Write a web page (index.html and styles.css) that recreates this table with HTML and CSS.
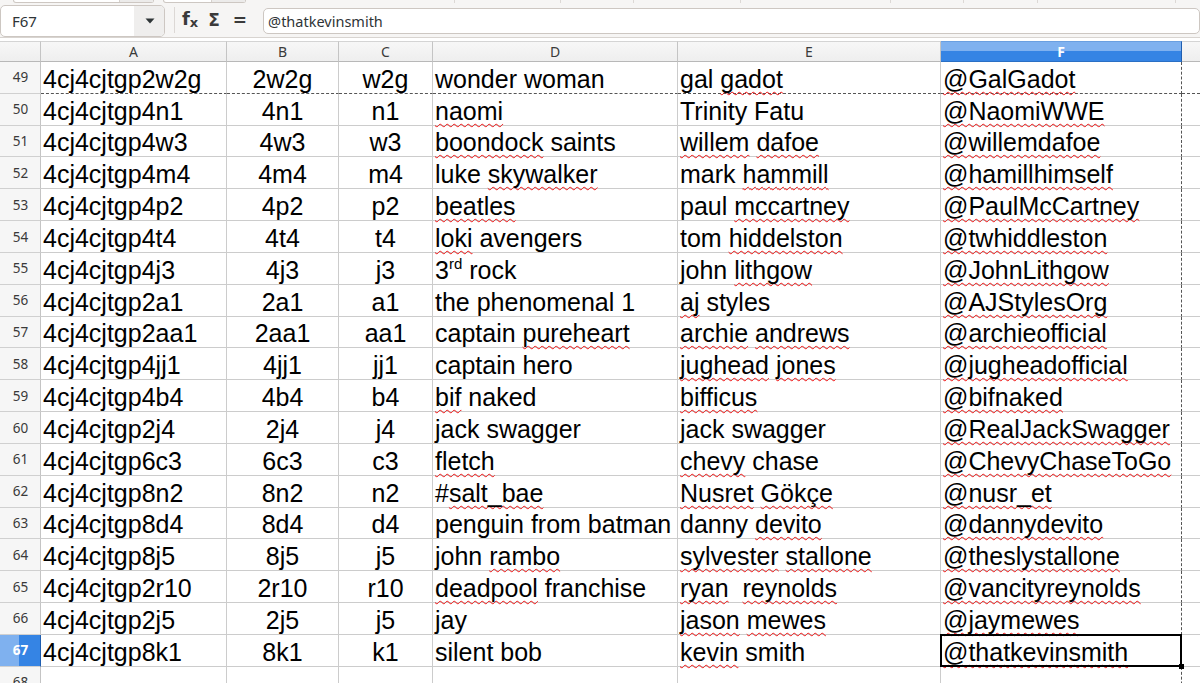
FILE: index.html
```html
<!DOCTYPE html>
<html>
<head>
<meta charset="utf-8">
<link rel="stylesheet" href="styles.css">
</head>
<body>
<div class="app">
  <div class="topstrip">
    <div class="tb tb1"><span class="tbbtn"></span></div>
    <div class="tb tb2"><span class="tbbtn"></span></div>
    <div class="tsep s1"></div>
    <div class="tsep s2"></div>
    <div class="tsep s3"></div>
    <div class="tsep s4"></div>
    <div class="tsep s5"></div>
    <div class="tsep s6"></div>
    <div class="tsep s7"></div>
    <div class="tsep s8"></div>
  </div>
  <div class="fbar">
    <div class="namebox">
      <div class="nb-text">F67</div>
      <div class="nb-btn"><svg width="10" height="6" viewBox="0 0 10 6"><path d="M0.5 0.5 L9.5 0.5 L5 5.5 Z" fill="#2e3436"/></svg></div>
    </div>
    <div class="vsep"></div>
    <div class="ficon fx">f<span class="fxsub">x</span></div>
    <div class="ficon sigma">Σ</div>
    <div class="ficon eq">=</div>
    <div class="finput">@thatkevinsmith</div>
  </div>
  <div class="sheet">
    <div class="row hdr">
      <div class="corner"></div>
      <div class="ch">A</div>
      <div class="ch">B</div>
      <div class="ch">C</div>
      <div class="ch">D</div>
      <div class="ch">E</div>
      <div class="ch sel">F</div>
      <div class="ch rest"></div>
    </div>
    <div class="row brk">
      <div class="rh">49</div><div class="c"><span class="t">4cj4cjtgp2w2g</span></div><div class="c m"><span class="t">2w2g</span></div><div class="c m"><span class="t">w2g</span></div><div class="c"><span class="t">wonder woman</span></div><div class="c"><span class="t">gal <span class="sp">gadot</span></span></div><div class="c f"><span class="t"><span class="sp">@GalGadot</span></span></div><div class="c rest"></div>
    </div>
    <div class="row">
      <div class="rh">50</div><div class="c"><span class="t">4cj4cjtgp4n1</span></div><div class="c m"><span class="t">4n1</span></div><div class="c m"><span class="t">n1</span></div><div class="c"><span class="t"><span class="sp">naomi</span></span></div><div class="c"><span class="t">Trinity Fatu</span></div><div class="c f"><span class="t"><span class="sp">@NaomiWWE</span></span></div><div class="c rest"></div>
    </div>
    <div class="row">
      <div class="rh">51</div><div class="c"><span class="t">4cj4cjtgp4w3</span></div><div class="c m"><span class="t">4w3</span></div><div class="c m"><span class="t">w3</span></div><div class="c"><span class="t"><span class="sp">boondock</span> saints</span></div><div class="c"><span class="t"><span class="sp">willem</span> <span class="sp">dafoe</span></span></div><div class="c f"><span class="t"><span class="sp">@willemdafoe</span></span></div><div class="c rest"></div>
    </div>
    <div class="row">
      <div class="rh">52</div><div class="c"><span class="t">4cj4cjtgp4m4</span></div><div class="c m"><span class="t">4m4</span></div><div class="c m"><span class="t">m4</span></div><div class="c"><span class="t">luke <span class="sp">skywalker</span></span></div><div class="c"><span class="t">mark <span class="sp">hammill</span></span></div><div class="c f"><span class="t"><span class="sp">@hamillhimself</span></span></div><div class="c rest"></div>
    </div>
    <div class="row">
      <div class="rh">53</div><div class="c"><span class="t">4cj4cjtgp4p2</span></div><div class="c m"><span class="t">4p2</span></div><div class="c m"><span class="t">p2</span></div><div class="c"><span class="t"><span class="sp">beatles</span></span></div><div class="c"><span class="t">paul <span class="sp">mccartney</span></span></div><div class="c f"><span class="t"><span class="sp">@PaulMcCartney</span></span></div><div class="c rest"></div>
    </div>
    <div class="row">
      <div class="rh">54</div><div class="c"><span class="t">4cj4cjtgp4t4</span></div><div class="c m"><span class="t">4t4</span></div><div class="c m"><span class="t">t4</span></div><div class="c"><span class="t"><span class="sp">loki</span> avengers</span></div><div class="c"><span class="t">tom <span class="sp">hiddelston</span></span></div><div class="c f"><span class="t"><span class="sp">@twhiddleston</span></span></div><div class="c rest"></div>
    </div>
    <div class="row">
      <div class="rh">55</div><div class="c"><span class="t">4cj4cjtgp4j3</span></div><div class="c m"><span class="t">4j3</span></div><div class="c m"><span class="t">j3</span></div><div class="c"><span class="t">3<span class="sup">rd</span> rock</span></div><div class="c"><span class="t">john <span class="sp">lithgow</span></span></div><div class="c f"><span class="t"><span class="sp">@JohnLithgow</span></span></div><div class="c rest"></div>
    </div>
    <div class="row">
      <div class="rh">56</div><div class="c"><span class="t">4cj4cjtgp2a1</span></div><div class="c m"><span class="t">2a1</span></div><div class="c m"><span class="t">a1</span></div><div class="c"><span class="t">the phenomenal 1</span></div><div class="c"><span class="t"><span class="sp">aj</span> styles</span></div><div class="c f"><span class="t"><span class="sp">@AJStylesOrg</span></span></div><div class="c rest"></div>
    </div>
    <div class="row">
      <div class="rh">57</div><div class="c"><span class="t">4cj4cjtgp2aa1</span></div><div class="c m"><span class="t">2aa1</span></div><div class="c m"><span class="t">aa1</span></div><div class="c"><span class="t">captain <span class="sp">pureheart</span></span></div><div class="c"><span class="t"><span class="sp">archie</span> <span class="sp">andrews</span></span></div><div class="c f"><span class="t"><span class="sp">@archieofficial</span></span></div><div class="c rest"></div>
    </div>
    <div class="row">
      <div class="rh">58</div><div class="c"><span class="t">4cj4cjtgp4jj1</span></div><div class="c m"><span class="t">4jj1</span></div><div class="c m"><span class="t">jj1</span></div><div class="c"><span class="t">captain hero</span></div><div class="c"><span class="t"><span class="sp">jughead</span> <span class="sp">jones</span></span></div><div class="c f"><span class="t"><span class="sp">@jugheadofficial</span></span></div><div class="c rest"></div>
    </div>
    <div class="row">
      <div class="rh">59</div><div class="c"><span class="t">4cj4cjtgp4b4</span></div><div class="c m"><span class="t">4b4</span></div><div class="c m"><span class="t">b4</span></div><div class="c"><span class="t"><span class="sp">bif</span> naked</span></div><div class="c"><span class="t"><span class="sp">bifficus</span></span></div><div class="c f"><span class="t"><span class="sp">@bifnaked</span></span></div><div class="c rest"></div>
    </div>
    <div class="row">
      <div class="rh">60</div><div class="c"><span class="t">4cj4cjtgp2j4</span></div><div class="c m"><span class="t">2j4</span></div><div class="c m"><span class="t">j4</span></div><div class="c"><span class="t">jack swagger</span></div><div class="c"><span class="t">jack swagger</span></div><div class="c f"><span class="t"><span class="sp">@RealJackSwagger</span></span></div><div class="c rest"></div>
    </div>
    <div class="row">
      <div class="rh">61</div><div class="c"><span class="t">4cj4cjtgp6c3</span></div><div class="c m"><span class="t">6c3</span></div><div class="c m"><span class="t">c3</span></div><div class="c"><span class="t"><span class="sp">fletch</span></span></div><div class="c"><span class="t"><span class="sp">chevy</span> chase</span></div><div class="c f"><span class="t"><span class="sp">@ChevyChaseToGo</span></span></div><div class="c rest"></div>
    </div>
    <div class="row">
      <div class="rh">62</div><div class="c"><span class="t">4cj4cjtgp8n2</span></div><div class="c m"><span class="t">8n2</span></div><div class="c m"><span class="t">n2</span></div><div class="c"><span class="t">#<span class="sp">salt_bae</span></span></div><div class="c"><span class="t"><span class="sp">Nusret</span> <span class="sp">Gökçe</span></span></div><div class="c f"><span class="t"><span class="sp">@nusr_et</span></span></div><div class="c rest"></div>
    </div>
    <div class="row">
      <div class="rh">63</div><div class="c"><span class="t">4cj4cjtgp8d4</span></div><div class="c m"><span class="t">8d4</span></div><div class="c m"><span class="t">d4</span></div><div class="c"><span class="t">penguin from batman</span></div><div class="c"><span class="t">danny <span class="sp">devito</span></span></div><div class="c f"><span class="t"><span class="sp">@dannydevito</span></span></div><div class="c rest"></div>
    </div>
    <div class="row">
      <div class="rh">64</div><div class="c"><span class="t">4cj4cjtgp8j5</span></div><div class="c m"><span class="t">8j5</span></div><div class="c m"><span class="t">j5</span></div><div class="c"><span class="t">john <span class="sp">rambo</span></span></div><div class="c"><span class="t"><span class="sp">sylvester</span> <span class="sp">stallone</span></span></div><div class="c f"><span class="t"><span class="sp">@theslystallone</span></span></div><div class="c rest"></div>
    </div>
    <div class="row">
      <div class="rh">65</div><div class="c"><span class="t">4cj4cjtgp2r10</span></div><div class="c m"><span class="t">2r10</span></div><div class="c m"><span class="t">r10</span></div><div class="c"><span class="t"><span class="sp">deadpool</span> franchise</span></div><div class="c"><span class="t"><span class="sp">ryan</span>  <span class="sp">reynolds</span></span></div><div class="c f"><span class="t"><span class="sp">@vancityreynolds</span></span></div><div class="c rest"></div>
    </div>
    <div class="row">
      <div class="rh">66</div><div class="c"><span class="t">4cj4cjtgp2j5</span></div><div class="c m"><span class="t">2j5</span></div><div class="c m"><span class="t">j5</span></div><div class="c"><span class="t">jay</span></div><div class="c"><span class="t"><span class="sp">jason</span> <span class="sp">mewes</span></span></div><div class="c f"><span class="t"><span class="sp">@jaymewes</span></span></div><div class="c rest"></div>
    </div>
    <div class="row">
      <div class="rh cur">67</div><div class="c"><span class="t">4cj4cjtgp8k1</span></div><div class="c m"><span class="t">8k1</span></div><div class="c m"><span class="t">k1</span></div><div class="c"><span class="t">silent bob</span></div><div class="c"><span class="t"><span class="sp">kevin</span> smith</span></div><div class="c f active"><span class="t"><span class="sp">@thatkevinsmith</span></span><span class="handle"></span></div><div class="c rest"></div>
    </div>
    <div class="row">
      <div class="rh last">68</div><div class="c"></div><div class="c m"></div><div class="c m"></div><div class="c"></div><div class="c"></div><div class="c f"></div><div class="c rest"></div>
    </div>
  </div>
</div>
</body>
</html>
```

FILE: styles.css
```css
html, body {
  margin: 0;
  padding: 0;
  background: #ffffff;
}
body {
  width: 1200px;
  height: 683px;
  overflow: hidden;
}
.app {
  width: 1200px;
  height: 683px;
  overflow: hidden;
  display: flex;
  flex-direction: column;
}

/* top toolbar remnant */
.topstrip {
  height: 4px;
  background: #f6f5f4;
  display: flex;
  align-items: flex-start;
}
.tb {
  height: 3px;
  background: #ffffff;
  border: 1px solid #cdc7c2;
  border-top: none;
  border-radius: 0 0 4px 4px;
  display: flex;
  justify-content: flex-end;
  box-sizing: border-box;
}
.tbbtn {
  display: block;
  width: 33px;
  height: 100%;
  background: #ecebea;
  border-left: 1px solid #d6d1cd;
}
.tb1 { margin-left: 13px; width: 141px; }
.tb2 { margin-left: 9px; width: 83px; }
.tsep {
  width: 1px;
  height: 3px;
  background: #dcd8d5;
}
.s1 { margin-left: 208px; }
.s2 { margin-left: 105px; }
.s3 { margin-left: 72px; }
.s4 { margin-left: 106px; }
.s5 { margin-left: 149px; }
.s6 { margin-left: 72px; }
.s7 { margin-left: 73px; }
.s8 { margin-left: 137px; }

/* formula bar */
.fbar {
  height: 37px;
  background: #f6f5f4;
  display: flex;
  align-items: center;
  box-sizing: border-box;
  border-bottom: 1px solid #d8d4d0;
  font-family: "Noto Sans", "DejaVu Sans", sans-serif;
  color: #2e3436;
}
.namebox {
  width: 165px;
  height: 32px;
  box-sizing: border-box;
  border: 1px solid #cdc7c2;
  border-radius: 5px;
  background: #ffffff;
  display: flex;
  overflow: hidden;
  margin-top: 2px;
}
.nb-text {
  flex: 1;
  padding-left: 11px;
  font-size: 15px;
  line-height: 30px;
}
.nb-btn {
  width: 28px;
  background: #efeeed;
  display: flex;
  align-items: center;
  justify-content: center;
  padding-left: 2px;
}
.vsep {
  width: 1px;
  height: 26px;
  background: #dcd8d5;
  margin-left: 9px;
}
.ficon {
  font-weight: bold;
  color: #3a3a3a;
  line-height: 20px;
}
.fx {
  margin-left: 7px;
  font-size: 18px;
  font-family: "DejaVu Sans", sans-serif;
}
.fxsub {
  font-size: 13px;
  position: relative;
  top: 2px;
}
.sigma {
  margin-left: 10px;
  font-size: 17px;
  font-family: "DejaVu Sans", sans-serif;
}
.eq {
  margin-left: 13px;
  font-size: 17px;
  font-family: "DejaVu Sans", sans-serif;
}
.finput {
  margin-left: 16px;
  width: 937px;
  height: 26px;
  box-sizing: border-box;
  border: 1px solid #cdc7c2;
  border-radius: 5px;
  background: #ffffff;
  font-size: 14.5px;
  line-height: 24px;
  padding-left: 4px;
  margin-top: 1px;
}

/* sheet */
.sheet {
  display: flex;
  flex-direction: column;
  font-family: "Liberation Sans", Arial, sans-serif;
}
.row {
  display: grid;
  grid-template-columns: 41px 186px 112px 94px 245px 263px 241px 18px;
  height: 31.83px;
}
.row.hdr {
  height: 21px;
  margin-top: 3px;
}
.corner, .ch {
  box-sizing: border-box;
  border-right: 1px solid #c4c4c4;
  border-bottom: 1px solid #b8b8b8;
  border-top: 1px solid #d4d4d4;
  background: linear-gradient(#f7f7f7, #eeeeee);
}
.ch {
  font-family: "Noto Sans", "DejaVu Sans", sans-serif;
  font-size: 14px;
  color: #3a3a3a;
  display: flex;
  align-items: center;
  justify-content: center;
  line-height: 18px;
}
.ch.sel {
  background: linear-gradient(#7fb1ef 0, #7fb1ef 48%, #3584e4 48%, #3584e4 100%);
  color: #ffffff;
  border-right: 1px solid #1f5eb0;
  border-bottom: 1px solid #2a6fc4;
  border-top: 1px solid #6a9fe0;
  font-weight: bold;
}
.ch.rest {
  border-right: none;
}
.rh {
  box-sizing: border-box;
  border-right: 1px solid #c4c4c4;
  border-bottom: 1px solid #d0d0d0;
  background: #f6f6f6;
  font-family: "Noto Sans", "DejaVu Sans", sans-serif;
  font-size: 13.5px;
  color: #3a3a3a;
  display: flex;
  align-items: center;
  justify-content: center;
  padding-left: 1px;
}
.rh.last {
  align-items: flex-start;
  padding-top: 6px;
}
.rh.cur {
  background: linear-gradient(to right, #7fb1ef 0, #7fb1ef 48%, #3584e4 48%, #3584e4 100%);
  color: #ffffff;
  font-weight: bold;
  border-right: 1px solid #1f5eb0;
}
.c {
  box-sizing: border-box;
  border-right: 1px solid #cccccc;
  border-bottom: 1px solid #cccccc;
  font-size: 25px;
  line-height: 28px;
  color: #000000;
  display: flex;
  align-items: flex-end;
  padding: 0 2px;
  position: relative;
}
.t {
  display: block;
  white-space: pre;
}
.c.m {
  justify-content: center;
}
.c.f {
  border-right: 1px dashed #555555;
}
.c.rest {
  border-right: none;
}
.row.brk .c {
  border-bottom: 1px dashed #555555;
}
.sp {
  text-decoration-line: underline;
  text-decoration-style: wavy;
  text-decoration-color: #ee1111;
  text-decoration-thickness: 1px;
  text-underline-offset: 3px;
  text-decoration-skip-ink: none;
}
.sup {
  font-size: 15px;
  line-height: 0;
  position: relative;
  top: -10px;
}
.c.active::after {
  content: "";
  position: absolute;
  left: -1px;
  top: -1px;
  right: -1px;
  bottom: -1px;
  border: 2px solid #000000;
  pointer-events: none;
}
.handle {
  position: absolute;
  right: -3px;
  bottom: -3px;
  width: 5px;
  height: 5px;
  background: #000000;
  z-index: 2;
}
```
